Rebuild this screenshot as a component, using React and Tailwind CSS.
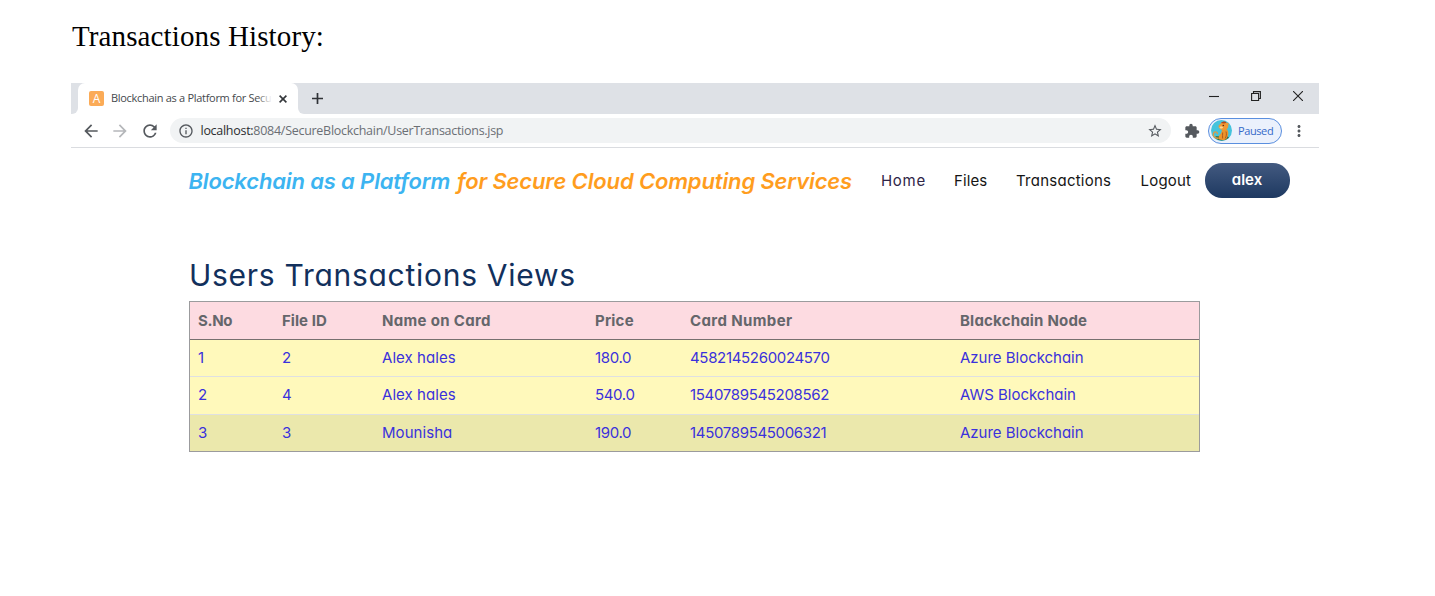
import { MdArrowBack, MdArrowForward, MdRefresh, MdInfoOutline, MdStarOutline, MdExtension, MdMoreVert } from "react-icons/md";

const NAV = [
  { label: "Home", cls: "w-[73px] tracking-[0.7px] text-[#2f2547]" },
  { label: "Files", cls: "w-[62px] tracking-[0.1px] text-[#151515]" },
  { label: "Transactions", cls: "w-[124.5px] tracking-[0.25px] text-[#151515]" },
  { label: "Logout", cls: "w-[64px] tracking-[0.2px] text-[#151515]" },
];

const HEADERS = [
  { label: "S.No", cls: "tracking-[-0.3px]" },
  { label: "File ID", cls: "tracking-[0.05px]" },
  { label: "Name on Card", cls: "tracking-[0.33px]" },
  { label: "Price", cls: "tracking-[0.2px]" },
  { label: "Card Number", cls: "tracking-[0.38px]" },
  { label: "Blackchain Node", cls: "tracking-[0.2px]" },
];

const ROWS = [
  { cls: "h-[37px] border-b border-[#dfe0e2] bg-[#fff9bb]", cells: ["1", "2", "Alex hales", "180.0", "4582145260024570", "Azure Blockchain"] },
  { cls: "h-[38px] border-b border-[#dfe0e2] bg-[#fff9bb] pb-px", cells: ["2", "4", "Alex hales", "540.0", "1540789545208562", "AWS Blockchain"] },
  { cls: "h-[36px] bg-[#ebe8ac]", cells: ["3", "3", "Mounisha", "190.0", "1450789545006321", "Azure Blockchain"] },
];

const CELL_TRACKING = ["", "", "tracking-[0.05px]", "tracking-[-0.35px]", "tracking-[-0.33px]", "tracking-[-0.02px]"];

const COLUMNS = "grid grid-cols-[84px_100px_213px_95px_270px_239px] items-center pl-[8px] text-[15px] leading-[22px]";

function Avatar() {
  return (
    <svg className="size-[21px]" viewBox="0 0 21 21">
      <circle cx="10.5" cy="10.5" r="10.5" fill="#45c3dc" />
      <path d="M3.5 17.5a10.5 10.5 0 0 0 14.5.3l-1.5-1.6H5z" fill="#2f6b42" />
      <path d="M7.5 18.3C3.5 18.5 1.2 15.5 2.8 12.8c1.5-1.8 4.2-.6 3.4 1.4" fill="none" stroke="#dd9a45" strokeWidth="1.4" />
      <path d="M12.5 8.3c3.3.1 5 2 4.8 5-.1 2.4-1 4.4-2.3 5.9-2.4 1.2-5 1.1-7.2.1-.7-2.2.3-3.9 1.7-5.3 1.3-1.6 1.2-3.5 1.5-5.5z" fill="#ec952b" />
      <path d="M9.3 4.1c1.3-2.3 4.6-2.8 6.5-1.2 1.5-.7 2.6.9 1.5 2.1.3 2.8-1.3 4.7-3.7 4.9-2.4.3-4.7-.5-5.4-1.9-1.2-1-.9-2.9 1.1-3.9z" fill="#f09a35" />
      <path d="M10 3.1c1.5-2 4.5-2 5.600-.3l-2.600.7z" fill="#b2481c" />
      <path d="M8.700 7c1.200-.9 2.900-.5 3.400.6-.5 1.100-2.500 1.300-3.400.3z" fill="#f8d596" />
      <circle cx="12.3" cy="5.5" r=".8" fill="#5b2413" />
      <path d="M11.7 12.5c-.2 2.3-.2 4-.1 6M15 11.5c.8 2.5.3 5-.8 7" fill="none" stroke="#a9521a" strokeWidth=".9" />
    </svg>
  );
}

function TabStrip() {
  return (
    <div className="flex h-[31px]">
      <div className="w-[7px] rounded-br-[6px] bg-[#dee1e6]" />
      <div className="h-[31px] w-[220px] bg-linear-to-b from-[#dee1e6] from-50% to-white to-50%">
        <div className="flex h-full items-center rounded-t-[7px] bg-white pl-[11px]">
          <div className="flex size-[15px] items-center justify-center rounded-[2px] bg-[#fbab57] font-['Open_Sans',sans-serif] text-[12px] leading-none text-white">A</div>
          <div className="relative mb-px ml-[7px] w-[161px] whitespace-nowrap font-['Open_Sans',sans-serif] text-[11px] leading-[18px] tracking-[-0.3px] text-[#45494d]">
            Blockchain as a Platform for Secu
            <span className="absolute inset-y-0 right-0 w-[15px] bg-linear-to-r from-transparent to-white" />
          </div>
          <svg className="ml-[7px] size-[8px]" viewBox="0 0 8 8" stroke="#33363a" strokeWidth="1.6">
            <path d="M.6.6l6.800 6.800M7.400.6L.6 7.400" />
          </svg>
        </div>
      </div>
      <div className="flex flex-1 items-center rounded-bl-[6px] bg-[#dee1e6] pl-[14px] pr-[16px]">
        <svg className="size-[11px]" viewBox="0 0 11 11" stroke="#303337" strokeWidth="1.7">
          <path d="M5.5 0v11M0 5.5h11" />
        </svg>
        <div className="mb-[6px] ml-auto flex items-center gap-[32px]">
          <svg className="size-[10px]" viewBox="0 0 10 10" stroke="#222" strokeWidth="1.1"><path d="M0 5.5h10" /></svg>
          <svg className="size-[10px]" viewBox="0 0 10 10" fill="none" stroke="#222" strokeWidth="1.1">
            <path d="M.6 2.5h7v7h-7zM2.5 2.5V.6h6.900v6.900H7.600" />
          </svg>
          <svg className="size-[10px]" viewBox="0 0 10 10" stroke="#222" strokeWidth="1.1"><path d="M0 0l10 10M10 0L0 10" /></svg>
        </div>
      </div>
    </div>
  );
}

function Toolbar() {
  return (
    <div className="flex h-[34px] items-center border-b border-[#dadce0] pl-[10px] text-[#55595e]">
      <MdArrowBack className="size-[20px]" />
      <MdArrowForward className="ml-[9px] size-[20px] text-[#b5b7ba]" />
      <MdRefresh className="ml-[9.5px] size-[20px]" />
      <div className="ml-[10.5px] flex h-[25px] w-[1001px] items-center rounded-full bg-[#f1f3f4] pl-[8px] pr-[8px]">
        <MdInfoOutline className="size-[16px]" />
        <span className="ml-[6.5px] whitespace-nowrap font-['Open_Sans',sans-serif] text-[12.5px] leading-[20px] tracking-[-0.28px] text-[#6b6f74]">
          <span className="text-[#2b2d30]">localhost:</span>8084/SecureBlockchain/UserTransactions.jsp
        </span>
        <MdStarOutline className="ml-auto size-[16px]" />
      </div>
      <MdExtension className="ml-[13px] size-[16px]" />
      <div className="ml-[8px] flex h-[26px] w-[74px] items-center rounded-full border border-[#5a8fdf] bg-[#ebf1fc] pl-[2px]">
        <Avatar />
        <span className="ml-[6px] font-['Open_Sans',sans-serif] text-[11px] leading-none tracking-[-0.4px] text-[#3569c9]">Paused</span>
      </div>
      <MdMoreVert className="ml-[8px] size-[18px]" />
    </div>
  );
}

function SiteHeader() {
  return (
    <header className="flex h-[65px] items-center pl-[117.5px]">
      <h1 className="w-[692.5px] whitespace-nowrap text-[22px] font-semibold italic leading-[30px] text-[#ff9d1e]">
        <span className="tracking-[-0.15px] text-[#3cb4f1]">Blockchain as a Platform</span>
        <span className="ml-[7px] tracking-[-0.14px]">for Secure Cloud Computing Services</span>
      </h1>
      <nav className="flex text-[15px] leading-[22px]">
        {NAV.map(({ label, cls }) => (
          <a key={label} className={cls}>{label}</a>
        ))}
      </nav>
      <button className="h-[35px] w-[85px] rounded-[17px] bg-linear-to-b from-[#435a80] to-[#1e3961] text-[15px] font-semibold text-white">alex</button>
    </header>
  );
}

function TransactionsTable() {
  return (
    <div className="ml-[118px] w-[1011px] border border-[#9b9b9d]">
      <div className={`${COLUMNS} h-[38px] border-b border-[#77706f] bg-[#fddbe1] font-bold text-[#65666b]`}>
        {HEADERS.map(({ label, cls }) => (
          <span key={label} className={cls}>{label}</span>
        ))}
      </div>
      {ROWS.map(({ cls, cells }, r) => (
        <div key={r} className={`${COLUMNS} ${cls} text-[#3a31dc]`}>
          {cells.map((text, c) => (
            <span key={c} className={CELL_TRACKING[c]}>{text}</span>
          ))}
        </div>
      ))}
    </div>
  );
}

export default function App() {
  return (
    <main className="h-[596px] w-[1435px] overflow-hidden bg-white pl-[71px] font-['Inter',sans-serif] [font-feature-settings:'cv11']">
      <h2 className="h-[83px] pl-px pt-[18px] font-['Liberation_Serif',serif] text-[29px] leading-[36px] tracking-[0.12px] text-black">
        Transactions History:
      </h2>
      <section className="w-[1248px]">
        <TabStrip />
        <Toolbar />
        <SiteHeader />
        <h2 className="ml-[118px] mt-[39px] h-[49px] whitespace-nowrap text-[30px] leading-[46px] tracking-[0.72px] text-[#12305c]">
          Users Transactions Views
        </h2>
        <TransactionsTable />
      </section>
    </main>
  );
}
